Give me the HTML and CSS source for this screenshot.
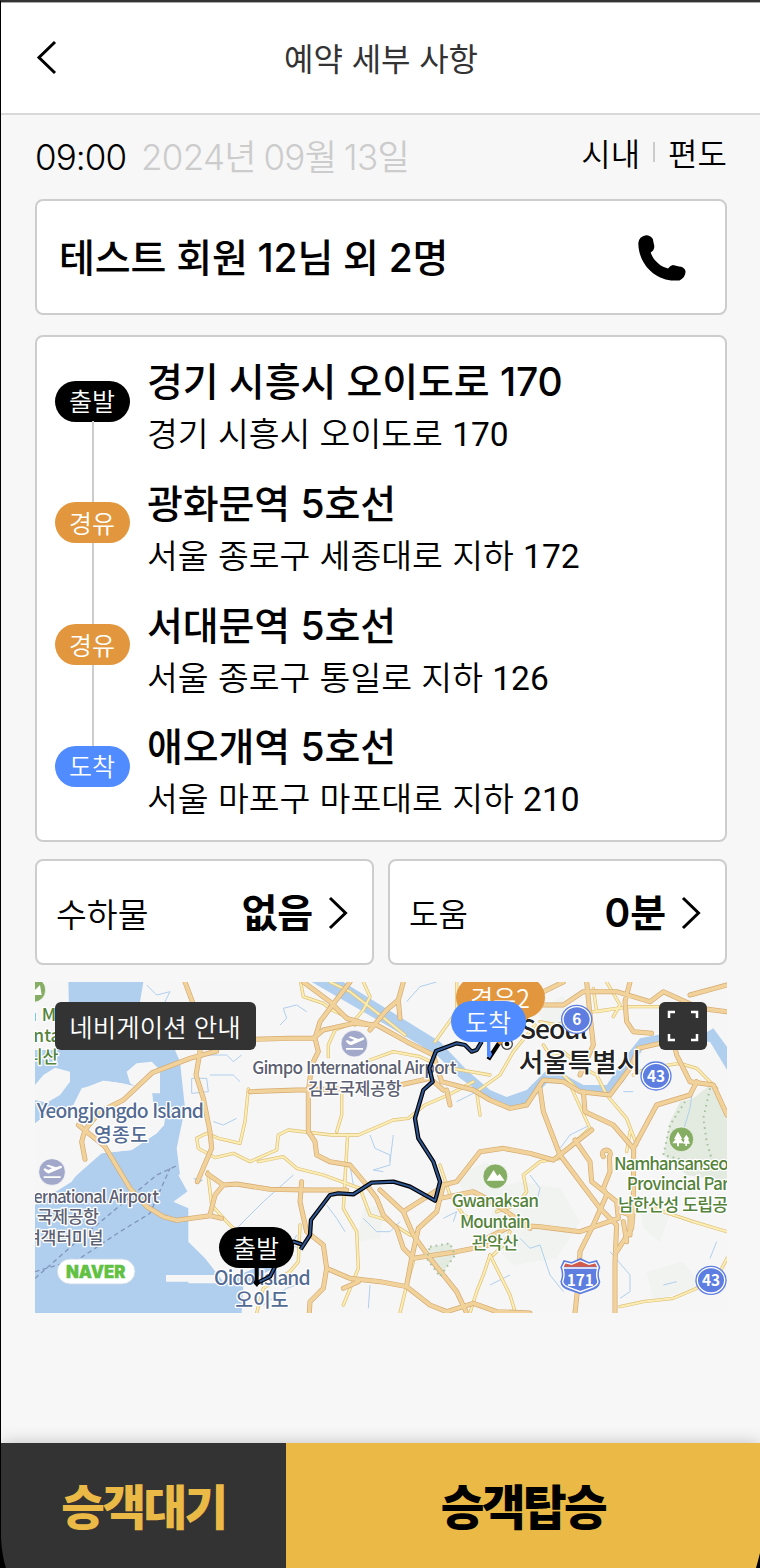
FILE: index.html
```
<!DOCTYPE html>
<html lang="ko">
<head>
<meta charset="utf-8">
<title>예약 세부 사항</title>
<link rel="stylesheet" href="styles.css">
</head>
<body>
<div class="screen">
  <header class="topbar">
    <svg class="back" width="22" height="36" viewBox="0 0 22 36"><path d="M19 2 3 17.500 19 33"/></svg>
    <h1 class="title">예약 세부 사항</h1>
  </header>
  <main class="content">
    <div class="meta">
      <div class="when"><span class="time">09:00</span><span class="date">2024년 09월 13일</span></div>
      <div class="kind"><span>시내</span><i class="bar"></i><span>편도</span></div>
    </div>
    <section class="card passenger">
      <strong class="strong">테스트 회원 12님 외 2명</strong>
      <svg class="phone" width="48" height="46" viewBox="0 0 48 46"><path d="M8 .3Q1 1.500.3 8C.6 30 18 46 37 45.500L41.500 45.500Q48 42 47.500 36Q46 31.500 41 31.500L35 30Q32.500 30 30 33.500C22 31.500 15 25 12.700 17.500Q16.500 15 16.300 11L14.800 4Q12 0 8 .3Z"/></svg>
    </section>
    <section class="card route">
      <div class="stop"><span class="pill start">출발</span><div class="place"><strong class="strong">경기 시흥시 오이도로 170</strong><span class="addr">경기 시흥시 오이도로 <span class="num">170</span></span></div></div>
      <div class="stop"><span class="pill via">경유</span><div class="place"><strong class="strong">광화문역 5호선</strong><span class="addr">서울 종로구 세종대로 지하 <span class="num">172</span></span></div></div>
      <div class="stop"><span class="pill via">경유</span><div class="place"><strong class="strong">서대문역 5호선</strong><span class="addr">서울 종로구 통일로 지하 <span class="num">126</span></span></div></div>
      <div class="stop"><span class="pill end">도착</span><div class="place"><strong class="strong">애오개역 5호선</strong><span class="addr">서울 마포구 마포대로 지하 <span class="num">210</span></span></div></div>
    </section>
    <div class="options">
      <div class="card option"><span class="label">수하물</span><strong class="strong value">없음</strong><svg class="chev" width="20" height="34" viewBox="0 0 20 34"><path d="M2 2 17.500 17 2 32"/></svg></div>
      <div class="card option"><span class="label help">도움</span><strong class="strong value">0분</strong><svg class="chev" width="20" height="34" viewBox="0 0 20 34"><path d="M2 2 17.500 17 2 32"/></svg></div>
    </div>
    <section class="map">
      <svg class="canvas" viewBox="15 21 2076 993" preserveAspectRatio="none">
        <defs>
          <g id="minor">
            <path d="M812 21 820 65 880 85 905 105 950 125 975 150M1000 21 1020 65 1000 105 965 145M900 21 960 50 1050 120 1125 180"/>
            <path d="M1280 21 1280 110 1215 200M965 145 915 165 895 210 895 245M1020 255 1090 230 1170 245 1235 275 1380 300"/>
            <path d="M935 350 935 420 920 470M655 342 645 440 630 505 565 490 530 475 500 490 505 520 555 548 610 535 660 560 740 525 745 480 775 465 905 480 985 480 1090 435 1135 430 1185 390 1255 360 1330 320"/>
            <path d="M533 590 545 690 590 740 630 780M685 560 760 545 800 580 880 600 990 640 1020 720 1070 735 1140 780"/>
            <path d="M953 480 945 610 940 700 980 770 985 880 940 990M1230 570 1260 660 1300 720 1340 740"/>
            <path d="M810 750 805 860 780 890 700 940 680 1014M1110 1014 1130 930 1150 860M1320 1014 1340 950 1360 900 1380 840"/>
            <path d="M1380 840 1410 900 1440 960 1455 1010M1390 840 1420 810 1440 770"/>
            <path d="M1690 40 1700 110 1800 95 1890 95M1730 21 1770 90 1750 125M1760 100 1690 110 1580 150 1530 140"/>
            <path d="M1540 210 1560 240 1600 230 1660 280 1700 300 1730 360 1790 430 1820 510M1600 300 1640 340 1625 340 1680 460 1590 540"/>
            <path d="M1590 550 1530 560 1480 600 1490 650 1460 690 1400 710M1800 470 1790 530M1810 300 1850 280 1950 265 2000 280 2060 340"/>
            <path d="M1770 995 1840 980 1930 970 2000 940 2070 890 2091 850M1850 690 1900 710 1990 740 2091 770"/>
            <path d="M1350 420 1340 350 1410 300 1450 230 1515 150"/>
          </g>
          <g id="major">
            <path d="M465 21 487 80 512 160 510 230 498 300 520 370 540 470 545 520 502 620"/>
            <path d="M560 228 480 250 367 293 280 375 210 410 165 465 155 500 165 553M145 450 225 515 300 640 350 695 400 725 440 736 540 722 575 730"/>
            <path d="M533 597 580 630 620 627 720 643 830 645 950 645M580 630 555 660 540 720"/>
            <path d="M670 193 780 190 850 190 880 165 970 145 1040 150 1130 200 1210 240 1235 320 1330 345 1380 375 1440 400 1490 390 1540 315 1600 320 1650 350 1740 360 1800 280 1825 220 1890 205"/>
            <path d="M960 21 900 100 870 140 855 190 865 230 845 270 835 350 835 470 855 500 860 540 900 560 960 570 1010 630 1040 670 1060 720 1100 760 1120 820 1150 850 1280 830 1380 810"/>
            <path d="M820 21 900 80 950 130 1020 150M1120 21 1105 75 1070 105 1020 165M1105 75 1110 130"/>
            <path d="M660 350 800 345 840 345 960 340M1110 330 1200 310 1240 345"/>
            <path d="M815 620 810 680 830 770 880 810 890 880 960 910 1050 920 1130 935 1200 990 1250 1010 1330 985 1400 1010 1500 1014"/>
            <path d="M890 880 880 940 840 980 838 1014M1250 345 1260 390M985 920 940 940"/>
            <path d="M1050 645 1120 710 1150 780 1200 850 1280 950 1310 1014M1240 630 1280 620 1350 530 1420 520 1500 535 1570 555 1640 500 1685 465"/>
            <path d="M1240 630 1220 710 1165 760 1145 850 1130 930M1230 640 1120 710M1230 670 1330 650 1390 680"/>
            <path d="M1530 340 1540 410 1590 540 1650 620 1710 700 1760 750 1755 860 1755 1014"/>
            <path d="M1635 495 1680 560 1685 620 1760 680 1765 730 1650 770 1530 755 1450 750 1350 800"/>
            <path d="M1720 545A12 12 0 1 1 1738 545L1740 590 1720 640 1730 660 1690 750 1650 830 1645 920 1635 1014"/>
            <path d="M1660 350 1665 410 1750 450 1810 520 1880 390 1980 360 2000 320M1811 520 1810 700 1805 760 1760 830"/>
            <path d="M1530 90 1600 90 1660 50 1760 50 1860 80 1900 50 2010 100 2091 110M1800 21 1785 80 1790 140 1810 170 1865 175M1920 150 1940 240 1980 320 2050 330 2091 420"/>
            <path d="M1670 21 1680 120 1690 210 1650 300M1470 100 1520 60 1600 21M1980 60 2091 30M1380 680 1430 710 1500 760"/>
            <path d="M1780 740 1790 800M1770 710 1800 720 1800 780"/>
          </g>
        </defs>
        <rect class="land" x="15" y="21" width="2076" height="993"/>
        <path class="sea" d="M115 21H340L330 80 395 120 435 225 450 260 465 400 440 520 450 600 520 615 430 680 475 700 475 800 525 850 580 920 720 860 780 780 790 810 730 880 640 930 635 1014H15V690L70 655 125 620 160 570 215 535 305 525 380 475 402 450 405 425 370 390 365 345 275 325 220 317 180 333 155 340 130 390 60 410 15 445V225H120Z"/>
        <path class="land" d="M15 330 40 300 75 278 120 290 120 320 90 360 50 383 15 375ZM290 290 320 265 365 260 390 285V355L350 355 300 325ZM408 900H560V925H475V920H408Z"/>
        <path class="land" d="M140 400 150 350 180 333 220 317 275 325 365 345 370 390 405 425 402 450 380 475 305 525 215 535 130 610 15 685V445H110Z"/>
        <path class="land" d="M445 600 500 580 490 610 540 650 475 655ZM360 30 430 21 410 80Z"/>
        <path class="park" d="M1950 380 1990 370 2040 330 2091 420V620L1970 600 1900 540 1920 440ZM1200 815 1260 805 1275 840 1230 905 1190 850Z"/>
        <path class="fainter" d="M1390 640 1470 620 1590 640 1650 740 1580 850 1450 870 1380 800ZM1280 600 1370 560 1440 640 1400 690 1300 650ZM1520 110 1600 60 1640 160 1550 150ZM1000 700 1060 690 1050 790 980 800ZM1850 890 1960 860 2010 930 1870 980ZM1830 690 1930 690 1890 800 1840 760Z"/>
        <path class="river" d="M845 21H940L1100 120 1230 200 1310 285 1380 345 1430 366 1490 345 1545 290 1600 297 1660 330 1730 330 1790 240 1830 190 1910 175 2000 190 2050 160 2091 215V285L2040 200 1900 205 1840 220 1780 320 1740 358 1660 360 1600 325 1550 325 1500 380 1435 402 1370 365 1290 310 1220 240 1060 145Z"/>
        <path class="stream" d="M350 30 380 60 420 50 400 90M120 21 125 60M530 240 590 240 610 260 635 240M485 310 530 310 535 350 485 355ZM540 300 610 300 630 320M550 440 580 450 620 430M625 755 700 680 790 600M700 990 770 940 830 920M800 780 785 810 820 825"/>
        <path class="stream" d="M750 150 770 130 760 100 800 90 830 110M1130 80 1170 35 1220 21M1020 480 1035 520 1080 540 1080 570 1030 585 1060 590M1090 480 1080 560M910 560 960 570 970 630M890 690 920 730 945 770M1000 730 1040 770 1080 770 1110 740M1240 730 1280 710 1270 740"/>
        <path class="stream" d="M1280 380 1340 350M1590 520 1620 480 1680 450M1780 350 1810 350M1500 600 1530 640 1520 680M1470 790 1500 820 1530 810 1560 900 1600 950M1380 930 1440 900M1740 830 1800 900 1800 950 1770 970M1990 330 1980 400 1950 500M1900 930 1940 920M2060 800 2040 850M1020 930 1015 1000M700 850 760 800"/>
        <path class="ferry" d="M15 910 140 800 260 700 380 600 445 570M15 890 150 850 270 770 360 715 420 580"/>
        <use href="#minor" class="minor-edge"/><use href="#minor" class="minor-fill"/>
        <use href="#major" class="major-edge"/><use href="#major" class="major-fill"/>
        <path class="treeline" d="M1200 815 1260 805 1275 840 1230 905 1190 850ZM1965 380 1920 450 1900 540 1960 555M2040 340 2020 430 2030 500 2050 570"/>
        <g class="poi air"><circle cx="66" cy="591" r="40"/><circle cx="973" cy="206" r="40"/></g>
        <g class="poi-mark"><path id="plane" d="M40 583 45 580 55 585 66 580 48 572 55 569 78 577 92 572Q99 574 94 579L58 595Q50 597 40 583ZM41 604H92V609H41Z"/><use href="#plane" x="907" y="-385"/></g>
        <g class="poi green"><circle cx="10" cy="45" r="37"/><circle cx="1396" cy="604" r="37"/><circle cx="1954" cy="493" r="37"/></g>
        <path class="poi-mark" d="M1370 617 1391 585 1402 603 1409 596 1424 617ZM15 45 30 30 35 60H15ZM1944 470 1957 492H1952L1962 505H1947V514H1941V505H1927L1937 492H1932ZM1969 479 1978 493H1974L1980 506H1971V513H1966V506H1960L1964 493H1960Z"/>
        <g class="txt blue"><text class="lg" x="20" y="430" textLength="502">Yeongjongdo Island</text><text class="kr" x="192" y="500" textLength="162">영종도</text><text class="lg" x="552" y="930" textLength="290">Oido Island</text><text class="kr" x="616" y="997" textLength="160">오이도</text></g>
        <g class="txt gray"><text x="10" y="683" textLength="377">ernational Airport</text><text x="20" y="745" textLength="187">국제공항</text><text x="-15" y="807" textLength="235">여객터미널</text><text x="667" y="298" textLength="613">Gimpo International Airport</text><text x="833" y="359" textLength="282">김포국제공항</text></g>
        <g class="txt forest"><text x="-12" y="138">n Ma</text><text x="10" y="202">nta</text><text x="-10" y="264">니산</text><text x="1265" y="696" textLength="262">Gwanaksan</text><text x="1290" y="758" textLength="212">Mountain</text><text x="1325" y="822" textLength="140">관악산</text><text x="1752" y="584" textLength="400">Namhansanseong</text><text x="1790" y="646" textLength="334">Provincial Park</text><text x="1764" y="708" textLength="376">남한산성 도립공원</text></g>
        <path class="trip-edge" d="M679 925 720 905 735 875 760 840 790 800 815 808M812 823 840 780 843 735 900 660 925 655 970 658 1025 623 1090 620 1140 635 1215 677 1220 660 1230 620 1210 560 1165 490 1155 430 1180 345 1208 320 1198 280 1218 228 1280 205 1305 210 1325 230 1340 225 1355 200M1410 200 1375 253"/><path class="trip-fill" d="M679 925 720 905 735 875 760 840 790 800 815 808M812 823 840 780 843 735 900 660 925 655 970 658 1025 623 1090 620 1140 635 1215 677 1220 660 1230 620 1210 560 1165 490 1155 430 1180 345 1208 320 1198 280 1218 228 1280 205 1305 210 1325 230 1340 225 1355 200"/>
        <g class="txt city"><text x="1470" y="192" textLength="202">Seoul</text><text x="1466" y="291" textLength="368">서울특별시</text></g>
        <circle cx="1431" cy="207" r="16" class="ring"/><circle cx="1431" cy="207" r="7"/>
        <g class="badge"><g><ellipse cx="1640" cy="133" rx="47" ry="44"/><ellipse cx="1878" cy="303" rx="47" ry="44"/><ellipse cx="2043" cy="916" rx="47" ry="44"/></g><g class="badge-ring"><ellipse cx="1640" cy="133" rx="41" ry="38"/><ellipse cx="1878" cy="303" rx="41" ry="38"/><ellipse cx="2043" cy="916" rx="41" ry="38"/></g><text x="1640" y="150">6</text><text x="1878" y="320">43</text><text x="2043" y="933">43</text></g>
        <path class="shield" d="M1601 855 1625 861 1651 849 1677 861 1701 855 1711 877Q1702 900 1711 920Q1708 939 1688 945L1651 958 1614 945Q1594 939 1591 920Q1600 900 1591 877Z"/>
        <path class="shield-top" d="M1605 863 1625 868 1651 857 1677 868 1697 863 1704 875H1598Z"/>
        <path class="shield-line" d="M1605 863 1625 868 1651 857 1677 868 1697 863 1704 877Q1696 900 1704 920Q1702 932 1684 938L1651 950 1618 938Q1600 932 1598 920Q1606 900 1598 877ZM1600 879H1702"/>
        <text class="shield-num" x="1651" y="932">171</text>
        <rect class="naver-bg" x="82" y="852" width="233" height="75" rx="38"/><text class="naver" x="108" y="908" textLength="178" lengthAdjust="spacingAndGlyphs">NAVER</text>
        <path d="M674 875H686V916L690 922 681 936 670 924 674 915Z"/>
        <path class="via-tail" d="M1544 75 1500 125 1410 210 1400 200Z"/>
        <path class="end-tail" d="M1371 195H1381V225L1386 238 1380 250 1371 243Z"/>
      </svg>
      <span class="pill via2">경유2</span>
      <span class="pill end pin-end">도착</span>
      <span class="pill start pin-start">출발</span>
      <span class="guide">네비게이션 안내</span>
      <span class="expand"><svg width="32" height="32" viewBox="0 0 32 32"><path d="M8 2H2V8M24 2H30V8M2 24V30H8M24 30H30V24"/></svg></span>
    </section>
  </main>
  <footer class="actions"><button class="wait">승객대기</button><button class="board">승객탑승</button></footer>
  <svg class="corner left" width="5" height="30" viewBox="0 0 5 30"><path d="M0 0Q1 18 5 30H0Z"/></svg>
  <svg class="corner right" width="5" height="15" viewBox="0 0 5 15"><path d="M5 0V15H1Q3 8 5 0Z"/></svg>
</div>
</body>
</html>
```
FILE: styles.css
```
* { box-sizing: border-box; }
body { margin: 0; background: #000; font-family: "Noto Sans CJK KR", sans-serif; color: #000; }
.screen { position: relative; display: flex; flex-direction: column; width: 760px; height: 1568px; border-left: 1px solid #000; border-top: 2px solid #333; background: #f7f7f7; overflow: hidden; }
.topbar { display: flex; align-items: center; height: 113px; border-top: 1px solid #aaa; border-bottom: 2px solid #d8d8d8; background: #fff; padding: 0 35px; }
.topbar svg, .chev { fill: none; stroke: #000; stroke-width: 3; }
.title { flex: 1; margin: 0 22px 0 0; text-align: center; font-size: 32px; font-weight: 400; color: #333; line-height: 48px; padding: 0 0 3px 1px; letter-spacing: -.1px; }
.content { padding: 0 33px 0 34px; flex: 1; }
.meta { display: flex; justify-content: space-between; height: 84px; padding-top: 14px; font-weight: 350; }
.when { display: flex; font-family: "Inter", "Noto Sans CJK KR", sans-serif; font-weight: 300; gap: 14px; font-size: 35px; line-height: 56px; }
.time { width: 92px; letter-spacing: -.900px; white-space: nowrap; }
.date { color: #ccc; font-weight: 350; letter-spacing: -.7px; word-spacing: -1.500px; }
.kind { display: flex; align-items: center; height: 46px; font-size: 32px; }
.bar { width: 2px; height: 20px; margin: 0 13px; background: #ccc; }
.card { border: 2px solid #cdcdcd; border-radius: 8px; background: #fff; }
.strong { font-family: "Inter", "Noto Sans CJK KR", sans-serif; font-weight: 500; font-size: 39px; line-height: 54px; letter-spacing: -.1px; }
.passenger { height: 116px; padding: 1px 39px 0 22px; display: flex; align-items: center; justify-content: space-between; }
.passenger .strong { word-spacing: -.500px; }
.route { height: 507px; margin-top: 20px; padding: 18px 18px 0; }
.stop { position: relative; display: flex; height: 121.800px; gap: 17px; }
.stop:not(:last-child)::before { content: ""; position: absolute; left: 37px; top: 66px; width: 1.500px; height: 82px; background: #ccc; }
.place { display: flex; flex-direction: column; white-space: nowrap; }
.addr { font-family: "Roboto", "Noto Sans CJK KR", sans-serif; font-size: 33.500px; font-weight: 350; line-height: 52px; word-spacing: 1.100px; }
.num { font-weight: 400; }
.pill { display: flex; flex: none; align-items: center; justify-content: center; width: 75px; height: 41px; border-radius: 21px; color: #fff; font-size: 25px; font-weight: 350; line-height: 36px; padding: 0 1px 2px 0; }
.stop .pill { margin-top: 25.500px; }
.start { background: #000; }
.via, .via2 { background: #e2973e; }
.end { background: #508bff; }
.options { display: grid; grid-template-columns: 1fr 1fr; gap: 14px; margin-top: 17px; }
.option { height: 106px; display: flex; align-items: center; padding: 1px 24px 0 19px; }
.option .chev { margin-left: 15px; }
.label { flex: 1; font-size: 33.500px; font-weight: 350; }
.help { font-size: 32px; padding-bottom: 2px; }
.value { font-weight: 600; }
.map { position: relative; height: 331px; margin-top: 17px; overflow: hidden; }
.canvas { display: block; width: 692px; height: 331px; }
.land { fill: #f6f6f6; }
.sea, .river { fill: #b0cfee; }
.park { fill: #e3ebe0; }
.fainter { fill: #f0f3ef; }
.stream { fill: none; stroke: #b0cfee; stroke-width: 3; }
.ferry { fill: none; stroke: #8195bd; stroke-width: 4; stroke-dasharray: 14 10; }
.treeline { fill: none; stroke: #a5c19d; stroke-width: 6; stroke-dasharray: 5 12; }
.minor-edge, .minor-fill, .major-edge, .major-fill { fill: none; stroke-linejoin: round; stroke-linecap: round; }
.minor-edge { stroke: #dec078; stroke-width: 10; }
.minor-fill { stroke: #fbedb4; stroke-width: 6; }
.major-edge { stroke: #d5aa70; stroke-width: 15; }
.major-fill { stroke: #f1d29b; stroke-width: 11; }
.trip-edge { fill: none; stroke: #000; stroke-width: 13; stroke-linejoin: round; }
.trip-fill { fill: none; stroke: #315894; stroke-width: 6; stroke-linejoin: round; }
.poi { stroke: #fff; stroke-width: 2; }
.air { fill: #a2a8c9; }
.green { fill: #85ad63; }
.poi-mark { fill: #fff; }
.txt { font-family: "Noto Sans CJK KR", sans-serif; font-weight: 500; font-size: 52px; paint-order: stroke; stroke: #fff; stroke-width: 8px; stroke-linejoin: round; }
.txt .lg { font-size: 58px; }
.txt .kr { font-size: 58px; }
.blue { fill: #536b93; }
.gray { fill: #5c6072; }
.forest { fill: #55833b; }
.city { fill: #222; }
.txt.city { font-size: 80px; }
.ring { fill: #fff; stroke: #444; stroke-width: 4; }
.badge { fill: #5d7ee0; font: 700 46px "Noto Sans CJK KR", sans-serif; text-anchor: middle; }
.badge text, .shield-num { fill: #fff; }
.badge-ring { fill: none; stroke: #fff; stroke-width: 4; }
.shield { fill: #5d7ee0; }
.shield-top { fill: #d25b4c; }
.shield-line { fill: none; stroke: #fff; stroke-width: 4; }
.shield-num { font: 700 46px "Noto Sans CJK KR", sans-serif; text-anchor: middle; }
.naver-bg { fill: #fff; stroke: #cbdbea; stroke-width: 3; }
.naver { font: 900 50px "Inter", sans-serif; fill: #61c142; stroke: #61c142; stroke-width: 1px; }
.via-tail { fill: #e2973e; }
.end-tail { fill: #508bff; }
.via2, .pin-end, .pin-start { position: absolute; }
.via2 { left: 421px; top: -5px; width: 89px; height: 41px; }
.pin-end { left: 416px; top: 19px; }
.pin-start { left: 184px; top: 245px; }
.guide { position: absolute; left: 20px; top: 20px; width: 201px; height: 48px; border-radius: 6px; background: #333; color: #fff; font-size: 25.500px; font-weight: 350; line-height: 47px; text-align: center; padding-right: 1px; }
.expand { position: absolute; right: 20px; top: 20px; display: grid; place-items: center; width: 48px; height: 48px; border-radius: 6px; background: #333; }
.expand svg { fill: none; stroke: #fff; stroke-width: 2.500; }
.actions { display: flex; height: 125px; box-shadow: 0 0 16px rgba(0,0,0,.22); }
.actions button { border: 0; padding: 0 0 3px; font-family: "Noto Sans CJK KR", sans-serif; font-size: 47.500px; font-weight: 900; letter-spacing: -2.600px; }
.wait { width: 285px; background: #333; color: #eab946; }
.board { flex: 1; background: #eab946; color: #000; }
.corner { position: absolute; bottom: 0; }
.left { left: 0; }
.right { right: 0; }
```
